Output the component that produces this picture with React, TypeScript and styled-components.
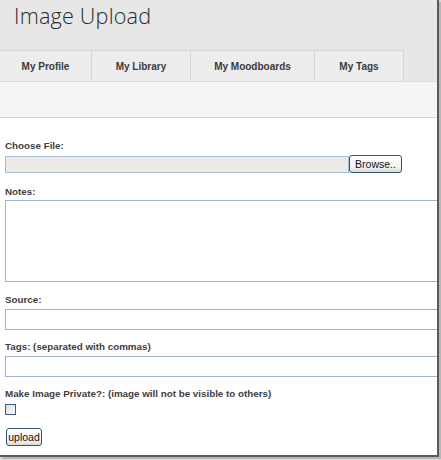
import React from 'react';
import styled, { createGlobalStyle } from 'styled-components';

const GlobalStyle = createGlobalStyle`
  html, body {
    margin: 0;
    padding: 0;
    background: #d9d9d9;
  }
  body {
    width: 441px;
    height: 460px;
    overflow: hidden;
  }
`;

const Window = styled.div`
  width: 437px;
  height: 455px;
  background: #ffffff;
  border-right: 2px solid #5a5a5a;
  border-bottom: 2px solid #5a5a5a;
  box-shadow: 2px 2px 0 #b8b8b8;
  overflow: hidden;
  display: flex;
  flex-direction: column;
`;

const Header = styled.div`
  height: 50px;
  background: #e7e7e7;
  padding-left: 14px;
  box-sizing: border-box;
`;

const Title = styled.h1`
  margin: 0;
  padding-top: 2px;
  font-family: 'Open Sans', sans-serif;
  font-weight: 300;
  font-size: 21.6px;
  line-height: 28px;
  color: #2a2a2a;
  letter-spacing: 0.2px;
`;

const TabBar = styled.div`
  display: flex;
  height: 31px;
  background: #e7e7e7;
`;

const Tab = styled.div<{ $w: number }>`
  width: ${(p) => p.$w}px;
  box-sizing: border-box;
  border-top: 1px solid #d6d6d6;
  border-right: 1px solid #d6d6d6;
  background: #ededed;
  display: flex;
  align-items: center;
  justify-content: center;
  font-family: 'Liberation Sans', Arial, sans-serif;
  font-weight: bold;
  font-size: 10px;
  color: #3a3a3a;
`;

const Band = styled.div`
  height: 37px;
  background: #f5f5f5;
  border-top: 1px solid #dcdcdc;
  border-bottom: 1px solid #d4d4d4;
  box-sizing: border-box;
`;

const Form = styled.form`
  padding: 22px 0 0 5px;
  display: flex;
  flex-direction: column;
`;

const Field = styled.div<{ $gap?: number }>`
  display: flex;
  flex-direction: column;
  margin-bottom: ${(p) => p.$gap ?? 11}px;
`;

const Label = styled.label<{ $gap?: number }>`
  font-family: 'Liberation Sans', Arial, sans-serif;
  font-weight: bold;
  font-size: 9.8px;
  line-height: 12px;
  height: 12px;
  color: #404040;
  margin-bottom: ${(p) => p.$gap ?? 3}px;
`;

const FileRow = styled.div`
  display: flex;
  align-items: center;
  height: 18px;
`;

const FileBox = styled.div`
  width: 344px;
  height: 17px;
  box-sizing: border-box;
  background: #ecebe6;
  border: 1px solid #a9bdd4;
`;

const XpButton = styled.button<{ $w: number; $h: number }>`
  width: ${(p) => p.$w}px;
  height: ${(p) => p.$h}px;
  padding: 0;
  box-sizing: border-box;
  border: 1px solid #34507a;
  border-radius: 3px;
  background: linear-gradient(#ffffff, #f3f2ee 70%, #dedbd0);
  font-family: 'Liberation Sans', Arial, sans-serif;
  font-size: 10.5px;
  color: #111;
`;

const TextBox = styled.div<{ $h: number }>`
  width: 440px;
  height: ${(p) => p.$h}px;
  box-sizing: border-box;
  border: 1px solid #9fb4cc;
  background: #fff;
`;

const Check = styled.div`
  width: 11px;
  height: 11px;
  box-sizing: border-box;
  border: 1px solid #3b5e86;
  background: linear-gradient(135deg, #dcdcd6, #fdfdfc);
`;

const ButtonRow = styled.div`
  padding-left: 1px;
`;

export default function App() {
  return (
    <>
      <GlobalStyle />
      <Window>
        <Header>
          <Title>Image Upload</Title>
        </Header>
        <TabBar>
          <Tab $w={92}>My Profile</Tab>
          <Tab $w={99}>My Library</Tab>
          <Tab $w={124}>My Moodboards</Tab>
          <Tab $w={89}>My Tags</Tab>
        </TabBar>
        <Band />
        <Form>
          <Field $gap={13}>
            <Label>Choose File:</Label>
            <FileRow>
              <FileBox />
              <XpButton type="button" $w={53} $h={18}>Browse..</XpButton>
            </FileRow>
          </Field>
          <Field $gap={12}>
            <Label $gap={2}>Notes:</Label>
            <TextBox $h={82} />
          </Field>
          <Field $gap={11}>
            <Label>Source:</Label>
            <TextBox $h={21} />
          </Field>
          <Field $gap={11}>
            <Label>Tags: (separated with commas)</Label>
            <TextBox $h={21} />
          </Field>
          <Field $gap={12}>
            <Label $gap={4}>Make Image Private?: (image will not be visible to others)</Label>
            <Check />
          </Field>
          <ButtonRow>
            <XpButton type="button" $w={36} $h={18}>upload</XpButton>
          </ButtonRow>
        </Form>
      </Window>
    </>
  );
}
